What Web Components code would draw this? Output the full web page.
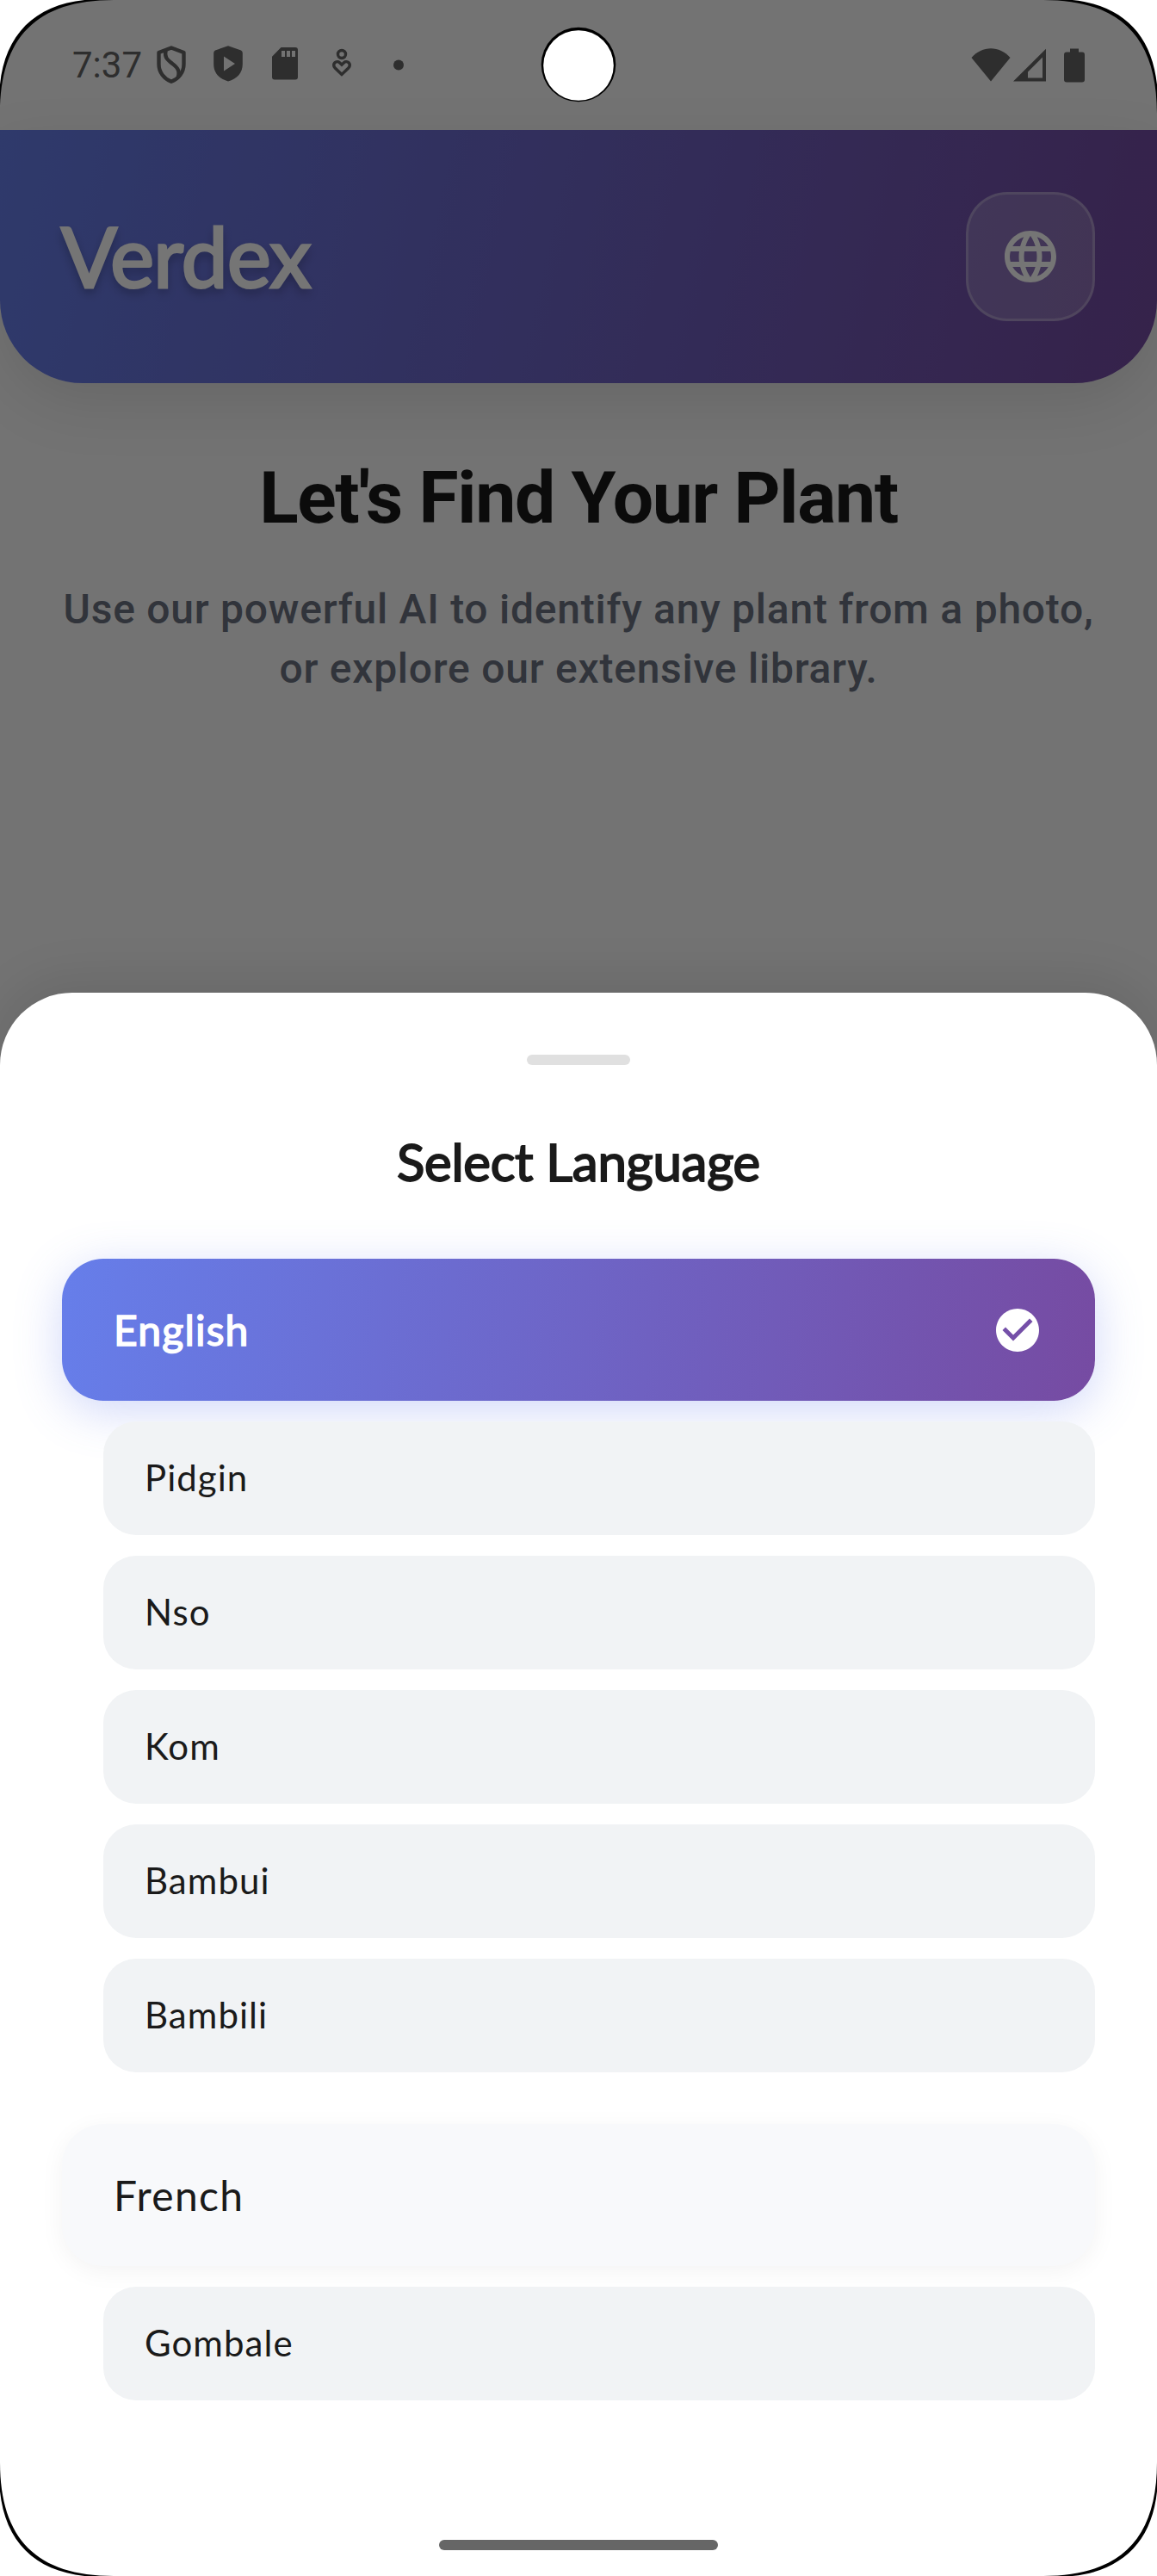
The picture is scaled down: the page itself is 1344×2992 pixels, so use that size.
<!DOCTYPE html>
<html lang="en">
<head>
<meta charset="utf-8">
<title>Verdex</title>
<style>
html,body{margin:0;background:#fff}
body{width:1344px;height:2992px;overflow:hidden;font-family:Roboto,sans-serif}
</style>
</head>
<body>
<verdex-app></verdex-app>

<script>
function define(name, html) {
  const tpl = document.createElement('template');
  tpl.innerHTML = html;
  customElements.define(name, class extends HTMLElement {
    constructor() {
      super();
      this.attachShadow({mode: 'open'}).append(tpl.content.cloneNode(true));
    }
  });
}

/* Status bar: clock, notification icons, system icons */
define('status-bar', `
<style>
:host{display:flex;align-items:center;justify-content:space-between;height:151px;padding:0 83px 0 84px;box-sizing:border-box;color:#646464}
.left,.right{display:flex;align-items:center}
.time{font:400 42px/50px Roboto,sans-serif;width:82px;white-space:nowrap}
.left svg{width:66px;height:66px;display:block}
.right svg{display:block}
</style>
<div class="left">
  <span class="time">7:37</span>
  <svg viewBox="0 0 66 66" fill="none" stroke="currentColor" stroke-width="4.4" stroke-linejoin="round"><path d="M33 12.5 47.5 18v13.500C47.500 41 41.500 48.500 33 51.800 24.500 48.500 18.500 41 18.500 31.500V18Z"/><path d="M26.500 15.500c-1.500 8 1.500 10.500 6.500 14.500s10.500 7.500 8 16"/></svg>
  <svg viewBox="0 0 66 66" fill="currentColor"><path fill-rule="evenodd" d="M33 10.200 48 15.500Q49.800 16.300 49.800 18.500V31.500C49.800 41.500 43.500 48.500 33 51.500 22.500 48.500 16.200 41.500 16.200 31.500V18.500Q16.200 16.300 18 15.500ZM28 22.500V39.500L41 31Z"/></svg>
  <svg viewBox="0 0 66 66" fill="currentColor"><path fill-rule="evenodd" d="M28.500 12H45Q48 12 48 15V46.500Q48 49.500 45 49.500H21Q18 49.500 18 46.500V22.800ZM29 16v7h4v-7ZM35 16v7h4v-7ZM41 16v7h4v-7Z"/></svg>
  <svg viewBox="0 0 66 66" fill="none" stroke="currentColor" stroke-width="3.400"><circle cx="33" cy="20" r="4.500"/><path d="M33 43.500 25 35.700C21 31.300 27 26.500 30.500 29.700L33 32.200 35.500 29.700C39 26.500 45 31.300 41 35.700Z"/></svg>
  <svg viewBox="0 0 66 66" fill="currentColor"><circle cx="33" cy="32.500" r="6"/></svg>
</div>
<div class="right">
  <svg width="46" height="40" viewBox="0 0 46 40" fill="currentColor"><path d="M23 38.500 .5 11C13-3.500 33-3.500 45.500 11Z"/></svg>
  <svg width="44" height="40" viewBox="0 0 44 40" fill="currentColor"><path fill-rule="evenodd" d="M3 38.500 41 .8V38.500ZM20 34.500H37V10.500L20 27.500Z"/></svg>
  <svg style="margin-left:17px" width="26" height="40" viewBox="0 0 26 40" fill="currentColor"><path d="M8 .5h10v4h4Q25 4.500 25 7.500V36.500Q25 39.500 22 39.500H4Q1 39.500 1 36.500V7.500Q1 4.500 4 4.500H8Z"/></svg>
</div>`);

define('icon-button', `
<style>
:host{display:flex;align-items:center;justify-content:center;box-sizing:border-box;width:150px;height:150px;border:3px solid rgba(255,255,255,.26);border-radius:48px;background:rgba(255,255,255,.2);color:#fff}
</style><slot></slot>`);

define('app-header', `
<style>
:host{display:flex;align-items:center;justify-content:space-between;box-sizing:border-box;height:294px;padding:72px;border-radius:0 0 96px 96px;background:linear-gradient(102.34deg,#667eea,#764ba2);box-shadow:0 24px 70px rgba(0,0,0,.1)}
h1{margin:0 0 2px -1px;font:400 96px/116px Lato,sans-serif;letter-spacing:-.6px;color:#fff;-webkit-text-stroke:3px #fff;text-shadow:0 6px 12px rgba(0,0,0,.3)}
svg{display:block}
</style>
<h1>Verdex</h1>
<icon-button><svg width="72" height="72" viewBox="0 0 24 24" fill="#fff"><path d="M11.990 2C6.470 2 2 6.480 2 12s4.470 10 9.990 10C17.520 22 22 17.520 22 12S17.520 2 11.990 2zm6.930 6h-2.950c-.32-1.250-.78-2.450-1.380-3.560 1.840.63 3.370 1.910 4.330 3.560zM12 4.040c.83 1.200 1.480 2.530 1.910 3.960h-3.820c.43-1.430 1.080-2.760 1.910-3.960zM4.260 14C4.100 13.360 4 12.690 4 12s.1-1.360.26-2h3.380c-.08.66-.14 1.320-.14 2 0 .68.06 1.340.14 2H4.260zm.82 2h2.950c.32 1.250.78 2.450 1.380 3.560-1.840-.63-3.370-1.900-4.330-3.560zm2.950-8H5.080c.96-1.660 2.490-2.930 4.330-3.560C8.810 5.550 8.350 6.750 8.030 8zM12 19.960c-.83-1.200-1.480-2.530-1.910-3.960h3.820c-.43 1.430-1.080 2.760-1.910 3.960zM14.340 14H9.660c-.09-.66-.16-1.320-.16-2 0-.68.07-1.350.16-2h4.680c.09.65.16 1.320.16 2 0 .68-.07 1.340-.16 2zm.25 5.560c.6-1.110 1.060-2.310 1.380-3.560h2.950c-.96 1.650-2.490 2.930-4.330 3.560zM16.360 14c.08-.66.14-1.320.14-2 0-.68-.06-1.340-.14-2h3.380c.16.64.26 1.310.26 2s-.1 1.360-.26 2h-3.380z"/></svg></icon-button>`);

define('hero-copy', `
<style>
:host{display:block;padding-top:84px;text-align:center}
h2{margin:0 0 44px;font:700 84px/100px Roboto,sans-serif;letter-spacing:-1.3px;color:#1a1a1a}
p{margin:0;font:500 48px/69px Roboto,sans-serif;letter-spacing:.75px;color:#6b7280;white-space:nowrap}
</style>
<h2><slot name="title"></slot></h2>
<p><slot></slot></p>`);

define('language-option', `
<style>
:host{display:flex;align-items:center;justify-content:space-between;box-sizing:border-box;height:165px;padding:0 60px;border-radius:48px;background:#f8f9fb;box-shadow:0 6px 28px rgba(0,0,0,.05);font:400 48px/58px Lato,sans-serif;letter-spacing:1.350px;color:#1a1a1a}
:host([selected]){background:linear-gradient(97.83deg,#667eea,#764ba2);box-shadow:0 12px 54px rgba(102,126,234,.3);color:#fff;-webkit-text-stroke:1.5px #fff;letter-spacing:1.2px}
svg{display:none}
:host([selected]) svg{display:block}
</style>
<span><slot></slot></span>
<svg width="60" height="60" viewBox="0 0 24 24" fill="#fff" stroke="none"><path d="M12 2C6.480 2 2 6.480 2 12s4.480 10 10 10 10-4.480 10-10S17.520 2 12 2zm-2 15l-5-5 1.410-1.410L10 14.170l7.590-7.590L19 8l-9 9z"/></svg>`);

define('dialect-option', `
<style>
:host{display:flex;align-items:center;box-sizing:border-box;height:132px;margin-left:48px;padding:0 48px 2px;border-radius:38px;background:#f1f3f5;font:400 42px/50px Lato,sans-serif;letter-spacing:1.050px;color:#1a1a1a}
</style><slot></slot>`);

define('language-group', `
<style>
:host{display:flex;flex-direction:column;gap:24px}
::slotted(dialect-option){position:relative}
</style><slot></slot>`);

define('language-sheet', `
<style>
:host{display:flex;flex-direction:column;box-sizing:border-box;height:1839px;padding:72px 72px 30px;border-radius:84px 84px 0 0;background:#fff;box-shadow:0 -12px 60px rgba(0,0,0,.1)}
.handle{align-self:center;width:120px;height:12px;border-radius:6px;background:#e0e0e0}
h3{margin:76px 0 77px;font:400 60px/72px Lato,sans-serif;letter-spacing:-.3px;-webkit-text-stroke:1.900px #1a1a1a;color:#1a1a1a;text-align:center}
.groups{display:flex;flex-direction:column;gap:60px}
.nav{align-self:center;margin-top:auto;width:324px;height:12px;border-radius:6px;background:#666}
</style>
<div class="handle"></div>
<h3>Select Language</h3>
<div class="groups"><slot></slot></div>
<div class="nav"></div>`);

/* One rounded corner of the display: white outside, thin black bezel */
define('screen-corner', `
<style>
:host{position:absolute;width:140px;height:140px}
:host([pos="tl"]){left:0;top:0}
:host([pos="tr"]){right:0;top:0;transform:scaleX(-1)}
:host([pos="bl"]){left:0;bottom:0;transform:scaleY(-1)}
:host([pos="br"]){right:0;bottom:0;transform:scale(-1)}
svg{display:block}
</style>
<svg width="140" height="140" viewBox="0 0 140 140"><path d="M0 0V132C0 43 43 0 132 0Z" fill="#000"/><path d="M-1 -1V118C-1 41 41 -1 118 -1Z" fill="#fff"/></svg>`);

define('camera-hole', `
<style>
:host{position:absolute;left:628px;top:31px}
svg{display:block}
</style>
<svg width="88" height="88" viewBox="0 0 88 88"><circle cx="44" cy="44" r="43.300"/><circle cx="44" cy="45" r="40.800" fill="#fff"/></svg>`);

define('verdex-app', `
<style>
:host{display:grid;position:relative;width:1344px;height:2992px;overflow:hidden}
.page,.scrim,.over{grid-area:1/1}
.page{background:#fafafa}
.scrim{background:rgba(0,0,0,.54);z-index:1}
.over{display:flex;flex-direction:column;justify-content:flex-end;z-index:2}
screen-corner,camera-hole{z-index:3}
</style>
<div class="page">
  <status-bar></status-bar>
  <app-header></app-header>
  <hero-copy><span slot="title">Let's Find Your Plant</span>Use our powerful AI to identify any plant from a photo,<br>or explore our extensive library.</hero-copy>
</div>
<div class="scrim"></div>
<div class="over">
  <language-sheet>
    <language-group>
      <language-option selected>English</language-option>
      <dialect-option>Pidgin</dialect-option>
      <dialect-option>Nso</dialect-option>
      <dialect-option>Kom</dialect-option>
      <dialect-option>Bambui</dialect-option>
      <dialect-option>Bambili</dialect-option>
    </language-group>
    <language-group>
      <language-option>French</language-option>
      <dialect-option>Gombale</dialect-option>
    </language-group>
  </language-sheet>
</div>
<camera-hole></camera-hole>
<screen-corner pos="tl"></screen-corner>
<screen-corner pos="tr"></screen-corner>
<screen-corner pos="bl"></screen-corner>
<screen-corner pos="br"></screen-corner>`);
</script>
</body>
</html>
